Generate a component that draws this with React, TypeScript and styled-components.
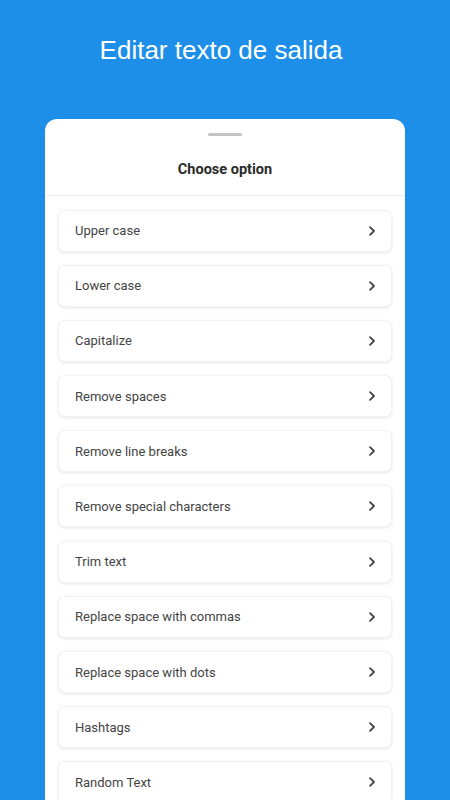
import React from "react";
import styled, { createGlobalStyle } from "styled-components";

const Global = createGlobalStyle`
  html, body { margin: 0; padding: 0; background: #1e8fe9; }
  body { width: 450px; height: 800px; overflow: hidden; font-family: Roboto, "Noto Sans", sans-serif; }
`;

const Page = styled.div`
  width: 450px;
  height: 800px;
  background: #1e8fe9;
  display: flex;
  flex-direction: column;
  align-items: center;
  overflow: hidden;
`;

const Heading = styled.h1`
  margin: 0 8px 0 0;
  padding-top: 35px;
  height: 119px;
  flex-shrink: 0;
  box-sizing: border-box;
  font-family: "Liberation Sans", Arial, sans-serif;
  font-weight: 400;
  font-size: 26px;
  line-height: 30px;
  color: #ffffff;
  text-align: center;
`;

const Sheet = styled.div`
  width: 360px;
  flex: 1;
  min-height: 0;
  overflow: hidden;
  background: #ffffff;
  border-radius: 12px 12px 0 0;
  display: flex;
  flex-direction: column;
`;

const Handle = styled.div`
  width: 34px;
  height: 3px;
  border-radius: 2px;
  background: #c4c4c4;
  margin: 14px auto 0;
  flex-shrink: 0;
`;

const SheetTitle = styled.div`
  height: 60px;
  flex-shrink: 0;
  display: flex;
  align-items: center;
  justify-content: center;
  font-size: 14.5px;
  font-weight: 700;
  color: #2a2a2a;
  border-bottom: 1px solid #efefef;
  padding-top: 7px;
  box-sizing: border-box;
`;

const List = styled.div`
  display: flex;
  flex-direction: column;
  gap: 13.2px;
  padding: 13.5px 13px 0 13px;
`;

const Row = styled.div`
  height: 42px;
  display: flex;
  align-items: center;
  justify-content: space-between;
  padding: 0 14px 0 16px;
  background: #ffffff;
  border-radius: 7px;
  border: 1px solid #f3f3f3;
  box-shadow: 0 1px 3px rgba(0, 0, 0, 0.1);
  box-sizing: border-box;
  flex-shrink: 0;
`;

const Label = styled.span`
  font-size: 13px;
  color: #444444;
`;

const Chevron = () => (
  <svg width="10" height="12" viewBox="0 0 10 12" aria-hidden="true">
    <path d="M3 2.2 L7 6 L3 9.8" fill="none" stroke="#444" strokeWidth="1.8" strokeLinecap="round" strokeLinejoin="round" />
  </svg>
);

const options = [
  "Upper case",
  "Lower case",
  "Capitalize",
  "Remove spaces",
  "Remove line breaks",
  "Remove special characters",
  "Trim text",
  "Replace space with commas",
  "Replace space with dots",
  "Hashtags",
  "Random Text",
];

export default function App() {
  return (
    <Page>
      <Global />
      <Heading>Editar texto de salida</Heading>
      <Sheet>
        <Handle />
        <SheetTitle>Choose option</SheetTitle>
        <List>
          {options.map((o) => (
            <Row key={o}>
              <Label>{o}</Label>
              <Chevron />
            </Row>
          ))}
        </List>
      </Sheet>
    </Page>
  );
}
